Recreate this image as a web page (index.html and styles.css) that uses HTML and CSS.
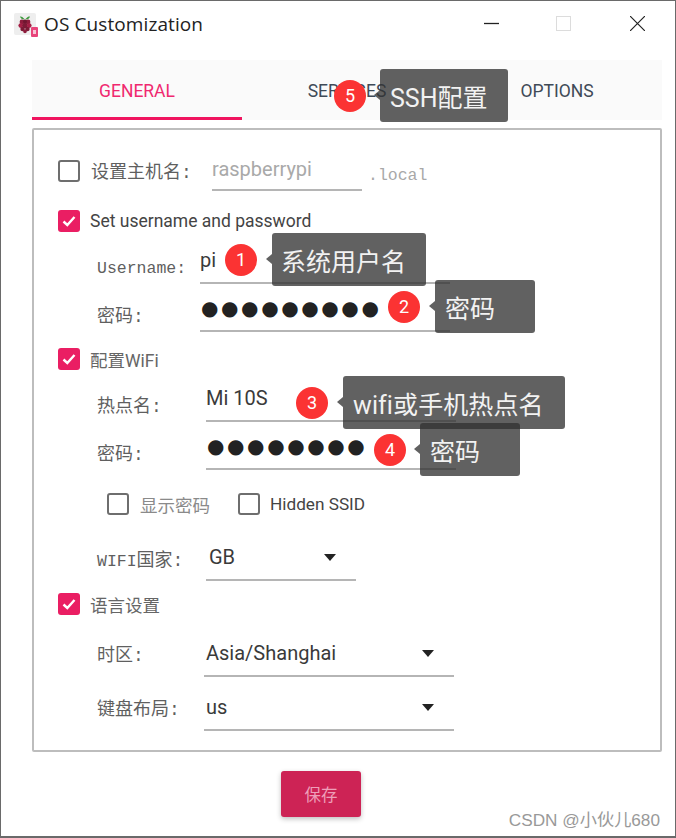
FILE: index.html
```html
<!DOCTYPE html>
<html lang="en">
<head>
  <meta charset="UTF-8">
  <meta name="viewport" content="width=device-width, initial-scale=1.0">
  <title>OS Customization</title>
  <link rel="stylesheet" href="styles.css">
</head>
<body>
  <div class="window">
    <div class="titlebar">
      <svg class="app-icon" width="24" height="24" viewBox="0 0 24 24">
        <rect x="0" y="0" width="22" height="22" rx="2" fill="#eeeeee"/>
        <path d="M10.5 6C8 3.5 7 3.5 6 3.5C6.5 5.5 8 6.5 10.5 6.5ZM11.5 6C14 3.5 15 3.5 16 3.5C15.5 5.5 14 6.5 11.5 6.5Z" fill="#3d9a3d"/>
        <circle cx="8" cy="9" r="2.4" fill="#8e1c3c"/>
        <circle cx="14" cy="9" r="2.4" fill="#8e1c3c"/>
        <circle cx="11" cy="8.6" r="2" fill="#6f1730"/>
        <circle cx="6.8" cy="12.6" r="2.4" fill="#a51f45"/>
        <circle cx="11" cy="12.4" r="2.6" fill="#7c1a36"/>
        <circle cx="15.2" cy="12.6" r="2.4" fill="#a51f45"/>
        <circle cx="8.6" cy="16" r="2.3" fill="#7c1a36"/>
        <circle cx="13.4" cy="16" r="2.3" fill="#7c1a36"/>
        <circle cx="11" cy="18.4" r="1.8" fill="#8e1c3c"/>
        <rect x="17" y="14" width="7" height="10" rx="1" fill="#e8447a"/>
        <rect x="19" y="17" width="3" height="4" fill="#f7c3d5"/>
      </svg>
      <span class="title">OS Customization</span>
      <div class="controls">
        <svg class="ctl ctl-min" width="15" height="15" viewBox="0 0 15 15"><path d="M0 7.5H15" stroke="#222" stroke-width="1.3"/></svg>
        <svg class="ctl ctl-max" width="15" height="15" viewBox="0 0 15 15"><rect x="0.5" y="0.5" width="14" height="14" fill="none" stroke="#dcdcdc"/></svg>
        <svg class="ctl ctl-close" width="15" height="15" viewBox="0 0 15 15"><path d="M0 0L15 15M15 0L0 15" stroke="#222" stroke-width="1.2"/></svg>
      </div>
    </div>

    <div class="tabs">
      <div class="tab active">GENERAL</div>
      <div class="tab">SERVICES</div>
      <div class="tab">OPTIONS</div>
    </div>

    <div class="panel">
      <div class="row row-host">
        <span class="check"></span>
        <span class="label label-host">设置主机名:</span>
        <div class="field field-host">raspberrypi</div>
        <span class="suffix">.local</span>
      </div>

      <div class="row row-check row-user-check">
        <span class="check on"><svg width="16" height="16" viewBox="0 0 16 16"><path d="M2.5 8.5L6.3 12L13.5 4" fill="none" stroke="#fff" stroke-width="2.4"/></svg></span>
        <span class="check-text dark">Set username and password</span>
      </div>
      <div class="row row-sub row-tall">
        <span class="label label-drop w-user"><span class="latin">Username:</span></span>
        <div class="field">pi</div>
      </div>
      <div class="row row-sub row-pass">
        <span class="label label-drop w-user">密码:</span>
        <div class="field dots">●●●●●●●●●</div>
      </div>

      <div class="row row-check row-wifi-check">
        <span class="check on"><svg width="16" height="16" viewBox="0 0 16 16"><path d="M2.5 8.5L6.3 12L13.5 4" fill="none" stroke="#fff" stroke-width="2.4"/></svg></span>
        <span class="check-text">配置WiFi</span>
      </div>
      <div class="row row-sub row-tall">
        <span class="label label-drop w-wifi">热点名:</span>
        <div class="field">Mi 10S</div>
      </div>
      <div class="row row-sub row-pass">
        <span class="label label-drop w-wifi">密码:</span>
        <div class="field dots">●●●●●●●●</div>
      </div>

      <div class="row row-show">
        <span class="check"></span>
        <span class="check-text">显示密码</span>
        <span class="check check-ssid"></span>
        <span class="check-text hidden-ssid">Hidden SSID</span>
      </div>

      <div class="row row-sub row-country">
        <span class="label label-nudge w-wifi"><span class="latin">WIFI</span>国家:</span>
        <div class="field select select-short"><span class="select-value">GB</span><span class="arrow"></span></div>
      </div>

      <div class="row row-check row-lang-check">
        <span class="check on"><svg width="16" height="16" viewBox="0 0 16 16"><path d="M2.5 8.5L6.3 12L13.5 4" fill="none" stroke="#fff" stroke-width="2.4"/></svg></span>
        <span class="check-text">语言设置</span>
      </div>
      <div class="row row-sub row-zone">
        <span class="label label-low w-lang">时区:</span>
        <div class="field select"><span>Asia/Shanghai</span><span class="arrow"></span></div>
      </div>
      <div class="row row-sub row-keyboard">
        <span class="label label-low w-lang">键盘布局:</span>
        <div class="field select"><span>us</span><span class="arrow"></span></div>
      </div>
    </div>

    <div class="footer">
      <button class="save">保存</button>
    </div>

    <!-- annotations drawn on top of the screenshot -->
    <div class="note note-ssh"><span class="badge">5</span><span class="tip">SSH配置</span></div>
    <div class="note note-user"><span class="badge">1</span><span class="tip">系统用户名</span></div>
    <div class="note note-pass"><span class="badge">2</span><span class="tip">密码</span></div>
    <div class="note note-hotspot"><span class="badge">3</span><span class="tip">wifi或手机热点名</span></div>
    <div class="note note-wifipass"><span class="badge">4</span><span class="tip">密码</span></div>

    <div class="watermark">CSDN @小伙儿680</div>
  </div>
</body>
</html>
```

FILE: styles.css
```css
* {
  box-sizing: border-box;
}
body {
  margin: 0;
  padding: 0;
  background-color: #fff;
  font-family: Roboto, "Noto Sans CJK SC", sans-serif;
  color: #333;
}
.window {
  position: relative;
  width: 676px;
  height: 838px;
  background: #fff;
  border: 1px solid #6a6a6a;
  border-bottom-width: 2px;
  overflow: hidden;
}

/* title bar */
.titlebar {
  display: flex;
  align-items: flex-start;
  height: 59px;
  padding: 12px 30px 0 13px;
}
.app-icon {
  display: block;
}
.title {
  margin-left: 6px;
  margin-top: -1px;
  font-family: "Open Sans", sans-serif;
  font-size: 19px;
  letter-spacing: 0.1px;
  line-height: 24px;
  color: #222;
}
.controls {
  display: flex;
  margin-left: auto;
  padding-top: 3px;
}
.ctl {
  display: block;
}
.ctl-max {
  margin-left: 57px;
}
.ctl-close {
  margin-left: 59px;
}

/* tabs */
.tabs {
  display: flex;
  width: 630px;
  height: 60px;
  margin-left: 31px;
  background: #fafafa;
}
.tab {
  flex: 1;
  height: 60px;
  padding-top: 2px;
  display: flex;
  align-items: center;
  justify-content: center;
  font-size: 17.5px;
  color: #3f4a57;
}
.tab.active {
  padding-top: 4px;
  color: #f0286f;
  border-bottom: 3px solid #f0145f;
}

/* form panel */
.panel {
  width: 630px;
  height: 624px;
  margin: 8px 0 0 31px;
  padding: 21px 0 0 24px;
  border: 2px solid #bdbdbd;
  border-radius: 2px;
}
.row {
  display: flex;
  align-items: center;
}
.row-host {
  height: 40px;
}
.row-check {
  height: 32px;
}
.row-user-check {
  margin-top: 14px;
}
.row-wifi-check {
  margin-top: 11px;
}
.row-lang-check {
  margin-top: 7px;
}
.row-sub {
  height: 46px;
  padding-left: 39px;
}
.row-tall {
  height: 47px;
}
.row-pass {
  margin-top: 2px;
}
.row-show {
  height: 32px;
  margin-top: 18px;
  padding-left: 49px;
}
.row-country {
  margin-top: 15px;
}
.row-zone {
  margin-top: 11px;
}
.row-keyboard {
  margin-top: 8px;
}

.check {
  flex: none;
  display: flex;
  align-items: center;
  justify-content: center;
  width: 22px;
  height: 22px;
  border: 2px solid #6e6e6e;
  border-radius: 3px;
  background: #fff;
}
.check.on {
  border: none;
  background: #ea1e63;
}
.check-ssid {
  margin-left: 28px;
}
.check-text {
  margin-left: 10px;
  font-size: 17.5px;
  color: #666;
  white-space: nowrap;
}
.check-text.dark {
  color: #444;
}
.hidden-ssid {
  font-size: 17.2px;
  color: #444;
}
.row-show .check-text:nth-child(2) {
  margin-left: 11px;
  color: #8a8a8a;
}

.label {
  flex: none;
  font-family: "Liberation Mono", "Noto Sans CJK SC", monospace;
  font-size: 18px;
  line-height: 20px;
  color: #5f5f5f;
  white-space: nowrap;
}
.latin {
  font-size: 16.5px;
}
.label-host {
  width: 121px;
  margin-left: 11px;
  padding-top: 4px;
}
.label-drop {
  padding-top: 16px;
}
.label-nudge {
  padding-top: 6px;
}
.label-low {
  padding-top: 3px;
}
.w-user {
  width: 103px;
}
.w-wifi {
  width: 109px;
}
.w-lang {
  width: 107px;
}

.field {
  display: flex;
  align-items: center;
  width: 250px;
  height: 100%;
  border-bottom: 2px solid #b5b5b5;
  font-size: 20px;
  color: #3a3a3a;
}
.field-host {
  width: 150px;
  padding-bottom: 3px;
  color: #a9a9a9;
}
.suffix {
  margin-left: 6px;
  padding-top: 8px;
  font-family: "Liberation Mono", monospace;
  font-size: 16.5px;
  color: #a8a8a8;
}
.dots {
  font-family: "DejaVu Sans", sans-serif;
  font-size: 20px;
  letter-spacing: 2.6px;
  padding-left: 1px;
  color: #222;
  white-space: nowrap;
}
.select {
  justify-content: space-between;
  padding-right: 20px;
  padding-left: 2px;
}
.select-short {
  width: 150px;
}
.select-value {
  padding-left: 1px;
}
.arrow {
  width: 0;
  height: 0;
  border-left: 6.5px solid transparent;
  border-right: 6.5px solid transparent;
  border-top: 7px solid #222;
}

/* save button */
.footer {
  display: flex;
  margin-top: 19px;
  padding-left: 280px;
}
.save {
  width: 80px;
  height: 46px;
  border: none;
  border-radius: 3px;
  background: #cd2355;
  color: #ee9fb9;
  font-family: Roboto, "Noto Sans CJK SC", sans-serif;
  font-size: 16.5px;
  box-shadow: 0 2px 5px rgba(0, 0, 0, 0.25);
}

/* annotations */
.note {
  position: absolute;
  display: flex;
  align-items: center;
  gap: 15px;
}
.note-ssh {
  left: 333px;
  top: 68px;
  gap: 14px;
}
.note-user {
  left: 224px;
  top: 232px;
}
.note-pass {
  left: 387px;
  top: 279px;
}
.note-hotspot {
  left: 295px;
  top: 375px;
}
.note-wifipass {
  left: 373px;
  top: 422px;
  gap: 14px;
}
.badge {
  flex: none;
  display: flex;
  align-items: center;
  justify-content: center;
  width: 32px;
  height: 32px;
  border-radius: 50%;
  background: #fb3333;
  color: #fff;
  font-size: 18px;
}
.tip {
  position: relative;
  display: flex;
  align-items: center;
  height: 53px;
  padding: 0 20px 0 9px;
  border-radius: 3px;
  background: rgba(50, 50, 50, 0.77);
  color: #f2f2f2;
  font-size: 25px;
  white-space: nowrap;
}
.note-pass .tip,
.note-wifipass .tip {
  padding-right: 40px;
  padding-left: 10px;
}
.note-ssh .tip {
  padding-left: 10px;
}
.note-hotspot .tip {
  padding-left: 10px;
  padding-right: 21px;
  letter-spacing: 0.1px;
}
.tip::before {
  content: "";
  position: absolute;
  left: -6px;
  top: 21px;
  border-top: 5px solid transparent;
  border-bottom: 5px solid transparent;
  border-right: 6px solid rgba(50, 50, 50, 0.77);
}

.watermark {
  position: absolute;
  right: 15px;
  bottom: 5px;
  font-family: "Liberation Sans", "Noto Sans CJK SC", sans-serif;
  font-size: 17.2px;
  color: #999;
  white-space: nowrap;
}
```
